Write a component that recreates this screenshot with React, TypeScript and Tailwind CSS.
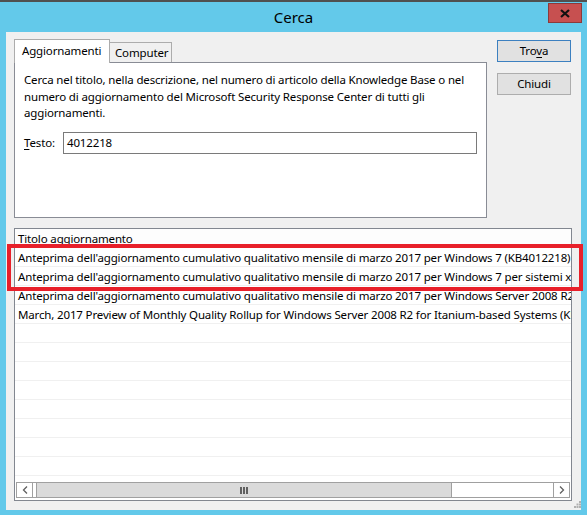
import React from "react";

const rows = [
  "Anteprima dell'aggiornamento cumulativo qualitativo mensile di marzo 2017 per Windows 7 (KB4012218)",
  "Anteprima dell'aggiornamento cumulativo qualitativo mensile di marzo 2017 per Windows 7 per sistemi x64 (KB4012218)",
  "Anteprima dell'aggiornamento cumulativo qualitativo mensile di marzo 2017 per Windows Server 2008 R2 per sistemi x64 (KB4012218)",
  "March, 2017 Preview of Monthly Quality Rollup for Windows Server 2008 R2 for Itanium-based Systems (KB4012218)",
  "", "", "", "", "", "", "", "", "",
];

export default function App() {
  return (
    <div className="relative w-[587px] h-[515px] overflow-hidden bg-[#63c9ea] text-[11.5px] tracking-[-0.15px] text-black [font-family:'Noto_Sans',sans-serif]">
      <div className="h-[2px] bg-[#505050]" />
      <div className="relative h-[30px] flex items-center justify-center">
        <span className="text-[15px] leading-none tracking-normal">Cerca</span>
        <div className="absolute left-[548px] top-[1px] w-[34px] h-[20px] bg-[#c75050] border border-[#8c3a3a] flex items-center justify-center">
          <svg width="10" height="9" viewBox="0 0 10 9">
            <path d="M1 1 L9 8 M9 1 L1 8" stroke="#111" strokeWidth="2.2" />
          </svg>
        </div>
      </div>
      <div className="relative mx-[6px] h-[478px] bg-[#f0f0f0] pl-[8px] pt-[7px]">
        <div className="flex">
          <div className="w-[473px]">
            <div className="flex items-end h-[23px]">
              <div className="relative z-10 h-[24px] -mb-px w-[96px] bg-white border border-b-0 border-[#acacac] pl-[7px] pt-[3px] leading-[16px]">
                Aggiornamenti
              </div>
              <div className="h-[20px] w-[63px] -ml-px bg-[#f0f0f0] border border-b-0 border-[#acacac] pl-[5px] pt-[2px] leading-[16px]">
                Computer
              </div>
            </div>
            <div className="h-[156px] bg-white border border-[#898c95] pl-[9px] pt-[9px]">
              <p className="leading-[16.5px]">
                Cerca nel titolo, nella descrizione, nel numero di articolo della Knowledge Base o nel
                <br />
                numero di aggiornamento del Microsoft Security Response Center di tutti gli
                <br />
                aggiornamenti.
              </p>
              <div className="flex items-center mt-[10px]">
                <span className="w-[39px]">
                  <span className="underline underline-offset-2">T</span>esto:
                </span>
                <div className="w-[414px] h-[22px] border border-[#7a7a7a] bg-white pl-[3px] leading-[20px]">
                  4012218
                </div>
              </div>
            </div>
          </div>
          <div className="ml-[10px] pt-[1px] flex flex-col gap-[11px]">
            <div className="w-[74px] h-[22px] bg-[#e1e1e1] border border-[#3c80c0] flex items-center justify-center">
              <span>
                Tro<span className="underline underline-offset-2">v</span>a
              </span>
            </div>
            <div className="w-[74px] h-[22px] bg-[#e1e1e1] border border-[#adadad] flex items-center justify-center">
              Chiudi
            </div>
          </div>
        </div>
        <div className="mt-[10px] w-[558px] h-[273px] border border-[#828790] bg-white flex flex-col overflow-hidden">
          <div className="h-[19px] shrink-0 border-b border-[#e5e5e5] bg-[#fdfdfd] pl-[3px] pt-[1px] leading-[18px] whitespace-nowrap">
            Titolo aggiornamento
          </div>
          <div className="flex-1 overflow-hidden">
            {rows.map((r, i) => (
              <div key={i} className="h-[19px] border-b border-[#f0f0f0] pl-[3px] pt-[1px] leading-[17px] whitespace-nowrap overflow-hidden">
                {r}
              </div>
            ))}
          </div>
          <div className="shrink-0 mx-[1px] mb-[2px] h-[16px] border border-[#a0a0a0] flex bg-white">
            <div className="w-[16px] h-full border-r border-[#a0a0a0] flex items-center justify-center">
              <svg width="6" height="8" viewBox="0 0 6 8">
                <path d="M5 0.5 L1.5 4 L5 7.5" stroke="#606060" strokeWidth="1.3" fill="none" />
              </svg>
            </div>
            <div className="w-[3px]" />
            <div className="w-[416px] h-full bg-[#dadada] border-l border-r border-[#a0a0a0] flex items-center justify-center">
              <div className="flex gap-[1px]">
                <div className="w-[2px] h-[7px] bg-[#606060]" />
                <div className="w-[2px] h-[7px] bg-[#606060]" />
                <div className="w-[2px] h-[7px] bg-[#606060]" />
              </div>
            </div>
            <div className="flex-1" />
            <div className="w-[16px] h-full border-l border-[#a0a0a0] flex items-center justify-center">
              <svg width="6" height="8" viewBox="0 0 6 8">
                <path d="M1 0.5 L4.5 4 L1 7.5" stroke="#606060" strokeWidth="1.3" fill="none" />
              </svg>
            </div>
          </div>
        </div>
        <svg className="absolute right-[0px] bottom-[2px]" width="7" height="7" viewBox="0 0 7 7">
          <rect x="5" y="0" width="2" height="2" fill="#b0b0b0" />
          <rect x="5" y="2.5" width="2" height="2" fill="#b0b0b0" />
          <rect x="2.5" y="2.5" width="2" height="2" fill="#b0b0b0" />
          <rect x="5" y="5" width="2" height="2" fill="#b0b0b0" />
          <rect x="2.5" y="5" width="2" height="2" fill="#b0b0b0" />
          <rect x="0" y="5" width="2" height="2" fill="#b0b0b0" />
        </svg>
      </div>
      <div className="absolute left-[7px] top-[244px] w-[576px] h-[47px] border-4 border-[#e8202a]" />
    </div>
  );
}
